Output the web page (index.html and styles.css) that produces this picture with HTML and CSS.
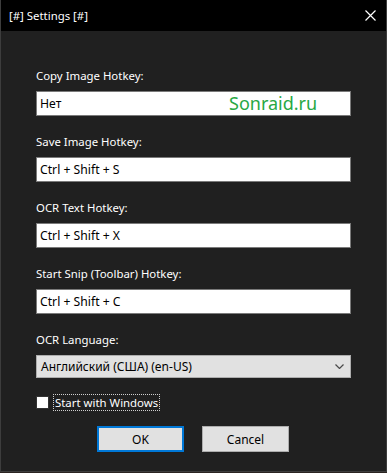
FILE: index.html
```html
<!DOCTYPE html>
<html lang="en">
<head>
    <meta charset="UTF-8">
    <title>[#] Settings [#]</title>
    <link rel="stylesheet" href="styles.css">
</head>
<body>
    <div class="window">
        <!-- Title bar -->
        <div class="titlebar">
            <span class="title">[#] Settings [#]</span>
            <svg class="close" width="11" height="11" viewBox="0 0 11 11">
                <path d="M0.5 0.5 L10.5 10.5 M10.5 0.5 L0.5 10.5" stroke="#ffffff" stroke-width="1.2" fill="none"/>
            </svg>
        </div>

        <div class="content">
            <div class="form-group">
                <label>Copy Image Hotkey:</label>
                <div class="field">
                    <input type="text" class="hotkey" value="Нет">
                    <span class="watermark">Sonraid.ru</span>
                </div>
            </div>
            <div class="form-group">
                <label>Save Image Hotkey:</label>
                <input type="text" class="hotkey" value="Ctrl + Shift + S">
            </div>
            <div class="form-group">
                <label>OCR Text Hotkey:</label>
                <input type="text" class="hotkey" value="Ctrl + Shift + X">
            </div>
            <div class="form-group">
                <label>Start Snip (Toolbar) Hotkey:</label>
                <input type="text" class="hotkey" value="Ctrl + Shift + C">
            </div>
            <div class="form-group">
                <label>OCR Language:</label>
                <div class="select">
                    <span>Английский (США) (en-US)</span>
                    <svg class="chevron" width="9" height="5" viewBox="0 0 9 5">
                        <path d="M0.5 0.5 L4.5 4.5 L8.5 0.5" stroke="#4a4a4a" stroke-width="1.2" fill="none"/>
                    </svg>
                </div>
            </div>

            <div class="check-row">
                <span class="checkbox"></span>
                <span class="check-label">Start with Windows</span>
            </div>

            <div class="buttons">
                <button class="btn btn-default">OK</button>
                <button class="btn">Cancel</button>
            </div>
        </div>
    </div>
</body>
</html>
```

FILE: styles.css
```css
:root {
    --body-bg: #202020;
    --text: #ffffff;
    --field-border: #7a7a7a;
    --button-bg: #e1e1e1;
    --button-border: #adadad;
    --accent: #0078d7;
}

body {
    margin: 0;
    background: #2b2421;
    font-family: 'Noto Sans', 'DejaVu Sans', sans-serif;
    font-size: 11.4px;
}

.window {
    width: 387px;
    height: 472px;
    box-sizing: border-box;
    border: 1px solid #3d3d3d;
    border-top: none;
    background: var(--body-bg);
    position: relative;
}

/* Title bar */
.titlebar {
    height: 31px;
    background: #000000;
    display: flex;
    align-items: center;
    justify-content: space-between;
    padding: 0 10px 0 8px;
}

.title {
    color: var(--text);
    font-size: 11.4px;
}

/* Form */
.content {
    padding: 37px 0 0 35px;
}

.form-group {
    display: flex;
    flex-direction: column;
    margin-bottom: 18px;
}

label {
    color: var(--text);
    line-height: 16px;
    margin-bottom: 7px;
}

.field {
    position: relative;
}

.hotkey {
    display: block;
    width: 315px;
    height: 25px;
    box-sizing: border-box;
    border: 1px solid var(--field-border);
    background: #ffffff;
    padding: 0 3px;
    font-family: 'Noto Sans', 'DejaVu Sans', sans-serif;
    font-size: 12.2px;
    color: #000000;
    outline: none;
}

.watermark {
    position: absolute;
    left: 193px;
    top: 0;
    line-height: 25px;
    font-size: 18px;
    color: #27a844;
}

.select {
    width: 315px;
    height: 23px;
    box-sizing: border-box;
    border: 1px solid var(--button-border);
    background: var(--button-bg);
    display: flex;
    align-items: center;
    justify-content: space-between;
    padding: 0 6px 0 4px;
    font-size: 12px;
    color: #000000;
}

/* Checkbox */
.check-row {
    display: flex;
    align-items: center;
    gap: 4px;
    margin-top: -2px;
}

.checkbox {
    width: 13px;
    height: 13px;
    box-sizing: border-box;
    border: 1px solid #333333;
    background: #ffffff;
}

.check-label {
    color: var(--text);
    border: 1px dotted #cfcfcf;
    padding: 0 1px;
    line-height: 15px;
}

/* Buttons */
.buttons {
    display: flex;
    gap: 18px;
    margin: 15px 0 0 61px;
}

.btn {
    width: 87px;
    height: 26px;
    background: var(--button-bg);
    border: 1px solid var(--button-border);
    font-family: 'Noto Sans', 'DejaVu Sans', sans-serif;
    font-size: 12px;
    color: #000000;
    padding: 0;
}

.btn-default {
    border: 2px solid var(--accent);
}
```
